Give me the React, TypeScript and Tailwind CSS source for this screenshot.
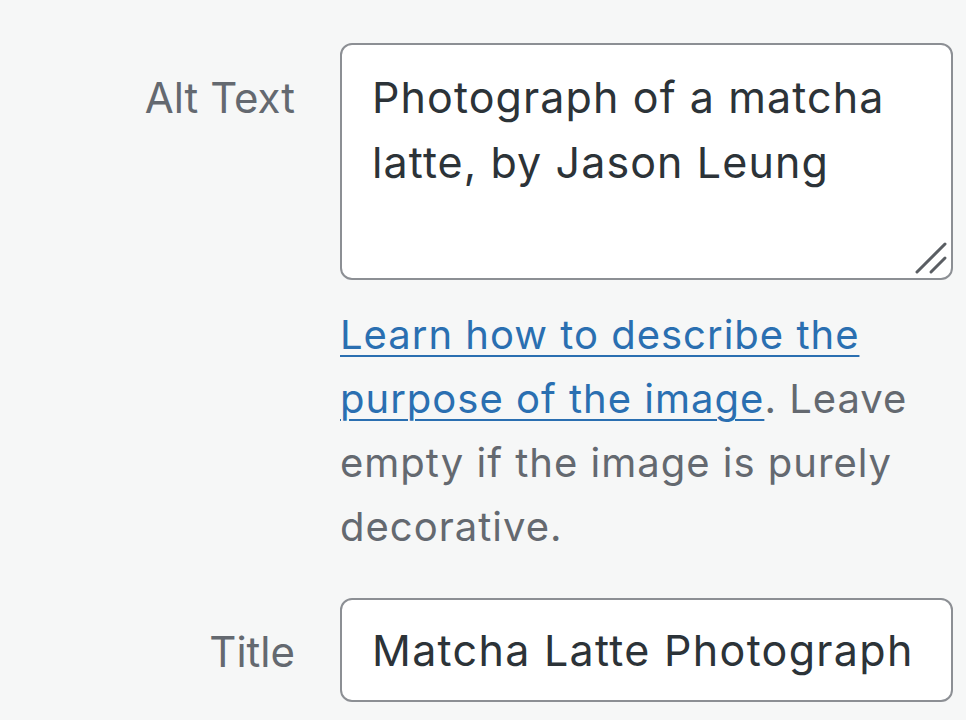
export default function App() {
  return (
    <div
      className="min-h-[720px] w-full bg-[#f6f7f7] pt-[43px] pr-[13px]"
      style={{ fontFamily: "Inter, 'Noto Sans', sans-serif" }}
    >
      <div className="grid grid-cols-[295px_613px] gap-x-[45px]">
        <label className="pt-[22px] text-right text-[42px] leading-[65px] text-[#646970]">
          Alt Text
        </label>
        <div>
          <div className="relative">
            <textarea
              readOnly
              defaultValue="Photograph of a matcha latte, by Jason Leung"
              className="block h-[237px] w-full resize-none rounded-[12px] border-2 border-[#8c8f94] bg-white pt-[20px] pl-[30px] pr-[20px] text-[43px] leading-[65px] tracking-[1.1px] text-[#2c3338] outline-none"
            />
            <svg
              className="pointer-events-none absolute right-[4px] bottom-[4px]"
              width="36"
              height="36"
              viewBox="0 0 36 36"
            >
              <path d="M4 32 L32 4" stroke="#5a5e63" strokeWidth="3" strokeLinecap="round" />
              <path d="M18 32 L32 18" stroke="#5a5e63" strokeWidth="3" strokeLinecap="round" />
            </svg>
          </div>
          <p className="mt-[23px] text-[40px] leading-[64px] tracking-[1px] text-[#646970]">
            <a
              href="#"
              className="text-[#2a6fb1] underline decoration-2 underline-offset-[6px]"
            >
              Learn how to describe the purpose of the image
            </a>
            . Leave empty if the image is purely decorative.
          </p>
        </div>

        <label className="mt-[39px] pt-[21px] text-right text-[42px] leading-[65px] text-[#646970]">
          Title
        </label>
        <div className="mt-[39px]">
          <input
            readOnly
            defaultValue="Matcha Latte Photograph"
            className="block h-[104px] w-full rounded-[12px] border-2 border-[#8c8f94] bg-white pl-[30px] pr-[20px] text-[43px] leading-[65px] tracking-[1.3px] text-[#2c3338] outline-none"
          />
        </div>
      </div>
    </div>
  );
}
